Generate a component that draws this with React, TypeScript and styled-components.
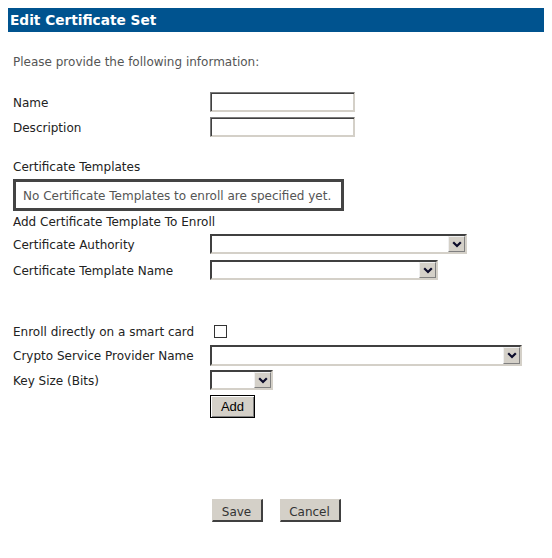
import React from "react";
import styled, { createGlobalStyle } from "styled-components";

const Global = createGlobalStyle`
  body {
    margin: 8px;
    background: #ffffff;
    font-family: "DejaVu Sans", Verdana, sans-serif;
  }
`;

const Page = styled.div`
  width: 536px;
`;

const Header = styled.div`
  height: 24px;
  background: #00538f;
  color: #ffffff;
  font-weight: bold;
  font-size: 13.7px;
  line-height: 25px;
  padding-left: 2px;
`;

const Form = styled.div`
  display: flex;
  flex-direction: column;
  padding-left: 5px;
`;

const Text = styled.div<{ $mt: number; $color?: string }>`
  margin-top: ${(p) => p.$mt}px;
  height: 16px;
  line-height: 17px;
  font-size: 12px;
  color: ${(p) => p.$color ?? "#222"};
`;

const Row = styled.div<{ $mt: number; $h?: number }>`
  margin-top: ${(p) => p.$mt}px;
  height: ${(p) => p.$h ?? 20}px;
  display: grid;
  grid-template-columns: 197px 1fr;
  align-items: center;
`;

const Label = styled.span`
  font-size: 12px;
  line-height: 16px;
  padding-top: 1px;
  color: #222;
  white-space: nowrap;
`;

const Field = styled.div`
  display: flex;
  align-items: center;
`;

const TextInput = styled.div<{ $w: number }>`
  box-sizing: border-box;
  width: ${(p) => p.$w}px;
  height: 20px;
  background: #fff;
  border-top: 1px solid #7a7a7a;
  border-left: 1px solid #7a7a7a;
  border-right: 1px solid #d4d0c8;
  border-bottom: 1px solid #d4d0c8;
  box-shadow: inset 1px 1px 0 #404040, inset -1px -1px 0 #d4d0c8;
`;

const SelectBox = styled.div<{ $w: number; $h?: number }>`
  box-sizing: border-box;
  width: ${(p) => p.$w}px;
  height: ${(p) => p.$h ?? 20}px;
  background: #fff;
  border-top: 2px solid #404040;
  border-left: 2px solid #404040;
  border-right: 2px solid #d4d0c8;
  border-bottom: 2px solid #d4d0c8;
  display: flex;
  justify-content: flex-end;
  align-items: stretch;
`;

const ArrowBtn = styled.div`
  box-sizing: border-box;
  width: 17px;
  background: #d4d0c8;
  border: 1px solid #808080;
  border-top-color: #f0f0f0;
  border-left-color: #f0f0f0;
  display: flex;
  align-items: center;
  justify-content: center;
`;

const Chevron = () => (
  <svg width="10" height="7" viewBox="0 0 10 7">
    <path d="M1.2 1.2 L5 5 L8.8 1.2" fill="none" stroke="#0b0b2a" strokeWidth="2.2" />
  </svg>
);

const Select = ({ w, h }: { w: number; h?: number }) => (
  <SelectBox $w={w} $h={h}>
    <ArrowBtn>
      <Chevron />
    </ArrowBtn>
  </SelectBox>
);

const NoticeBox = styled.div`
  margin-top: 4px;
  box-sizing: border-box;
  width: 331px;
  height: 32px;
  border: 3px solid #444;
  padding-left: 7px;
  padding-top: 1px;
  display: flex;
  align-items: center;
  font-size: 12px;
  color: #555;
  white-space: nowrap;
`;

const Checkbox = styled.div`
  box-sizing: border-box;
  width: 13px;
  height: 13px;
  margin-left: 4px;
  border: 1px solid #333;
  background: #fff;
`;

const AddButton = styled.button`
  box-sizing: border-box;
  width: 45px;
  height: 23px;
  padding: 0;
  background: #d4d0c8;
  border: 1px solid #000;
  box-shadow: inset 1px 1px 0 #fff, inset -1px -1px 0 #808080;
  font-family: "Liberation Sans", Arial, sans-serif;
  font-size: 13px;
  color: #000;
`;

const Actions = styled.div`
  margin-top: 81px;
  display: flex;
  justify-content: center;
  gap: 17px;
`;

const ActionButton = styled.button<{ $w: number }>`
  box-sizing: border-box;
  width: ${(p) => p.$w}px;
  height: 23px;
  padding: 3px 0 0;
  background: #d4d0c8;
  border: 1px solid #d4d0c8;
  border-right: 2px solid #404040;
  border-bottom: 2px solid #404040;
  font-family: "DejaVu Sans", Verdana, sans-serif;
  font-size: 12px;
  color: #333;
`;

export default function App() {
  return (
    <Page>
      <Global />
      <Header>Edit Certificate Set</Header>
      <Form>
        <Text $mt={22} $color="#555">Please provide the following information:</Text>
        <Row $mt={22}>
          <Label>Name</Label>
          <Field><TextInput $w={145} /></Field>
        </Row>
        <Row $mt={5}>
          <Label>Description</Label>
          <Field><TextInput $w={145} /></Field>
        </Row>
        <Text $mt={22}>Certificate Templates</Text>
        <NoticeBox>No Certificate Templates to enroll are specified yet.</NoticeBox>
        <Text $mt={3}>Add Certificate Template To Enroll</Text>
        <Row $mt={4}>
          <Label>Certificate Authority</Label>
          <Field><Select w={257} /></Field>
        </Row>
        <Row $mt={6}>
          <Label>Certificate Template Name</Label>
          <Field><Select w={228} /></Field>
        </Row>
        <Row $mt={41}>
          <Label>Enroll directly on a smart card</Label>
          <Field><Checkbox /></Field>
        </Row>
        <Row $mt={4} $h={21}>
          <Label>Crypto Service Provider Name</Label>
          <Field><Select w={312} h={21} /></Field>
        </Row>
        <Row $mt={4}>
          <Label>Key Size (Bits)</Label>
          <Field><Select w={63} /></Field>
        </Row>
        <Row $mt={5} $h={23}>
          <span />
          <Field><AddButton>Add</AddButton></Field>
        </Row>
      </Form>
      <Actions>
        <ActionButton $w={51}>Save</ActionButton>
        <ActionButton $w={61}>Cancel</ActionButton>
      </Actions>
    </Page>
  );
}
